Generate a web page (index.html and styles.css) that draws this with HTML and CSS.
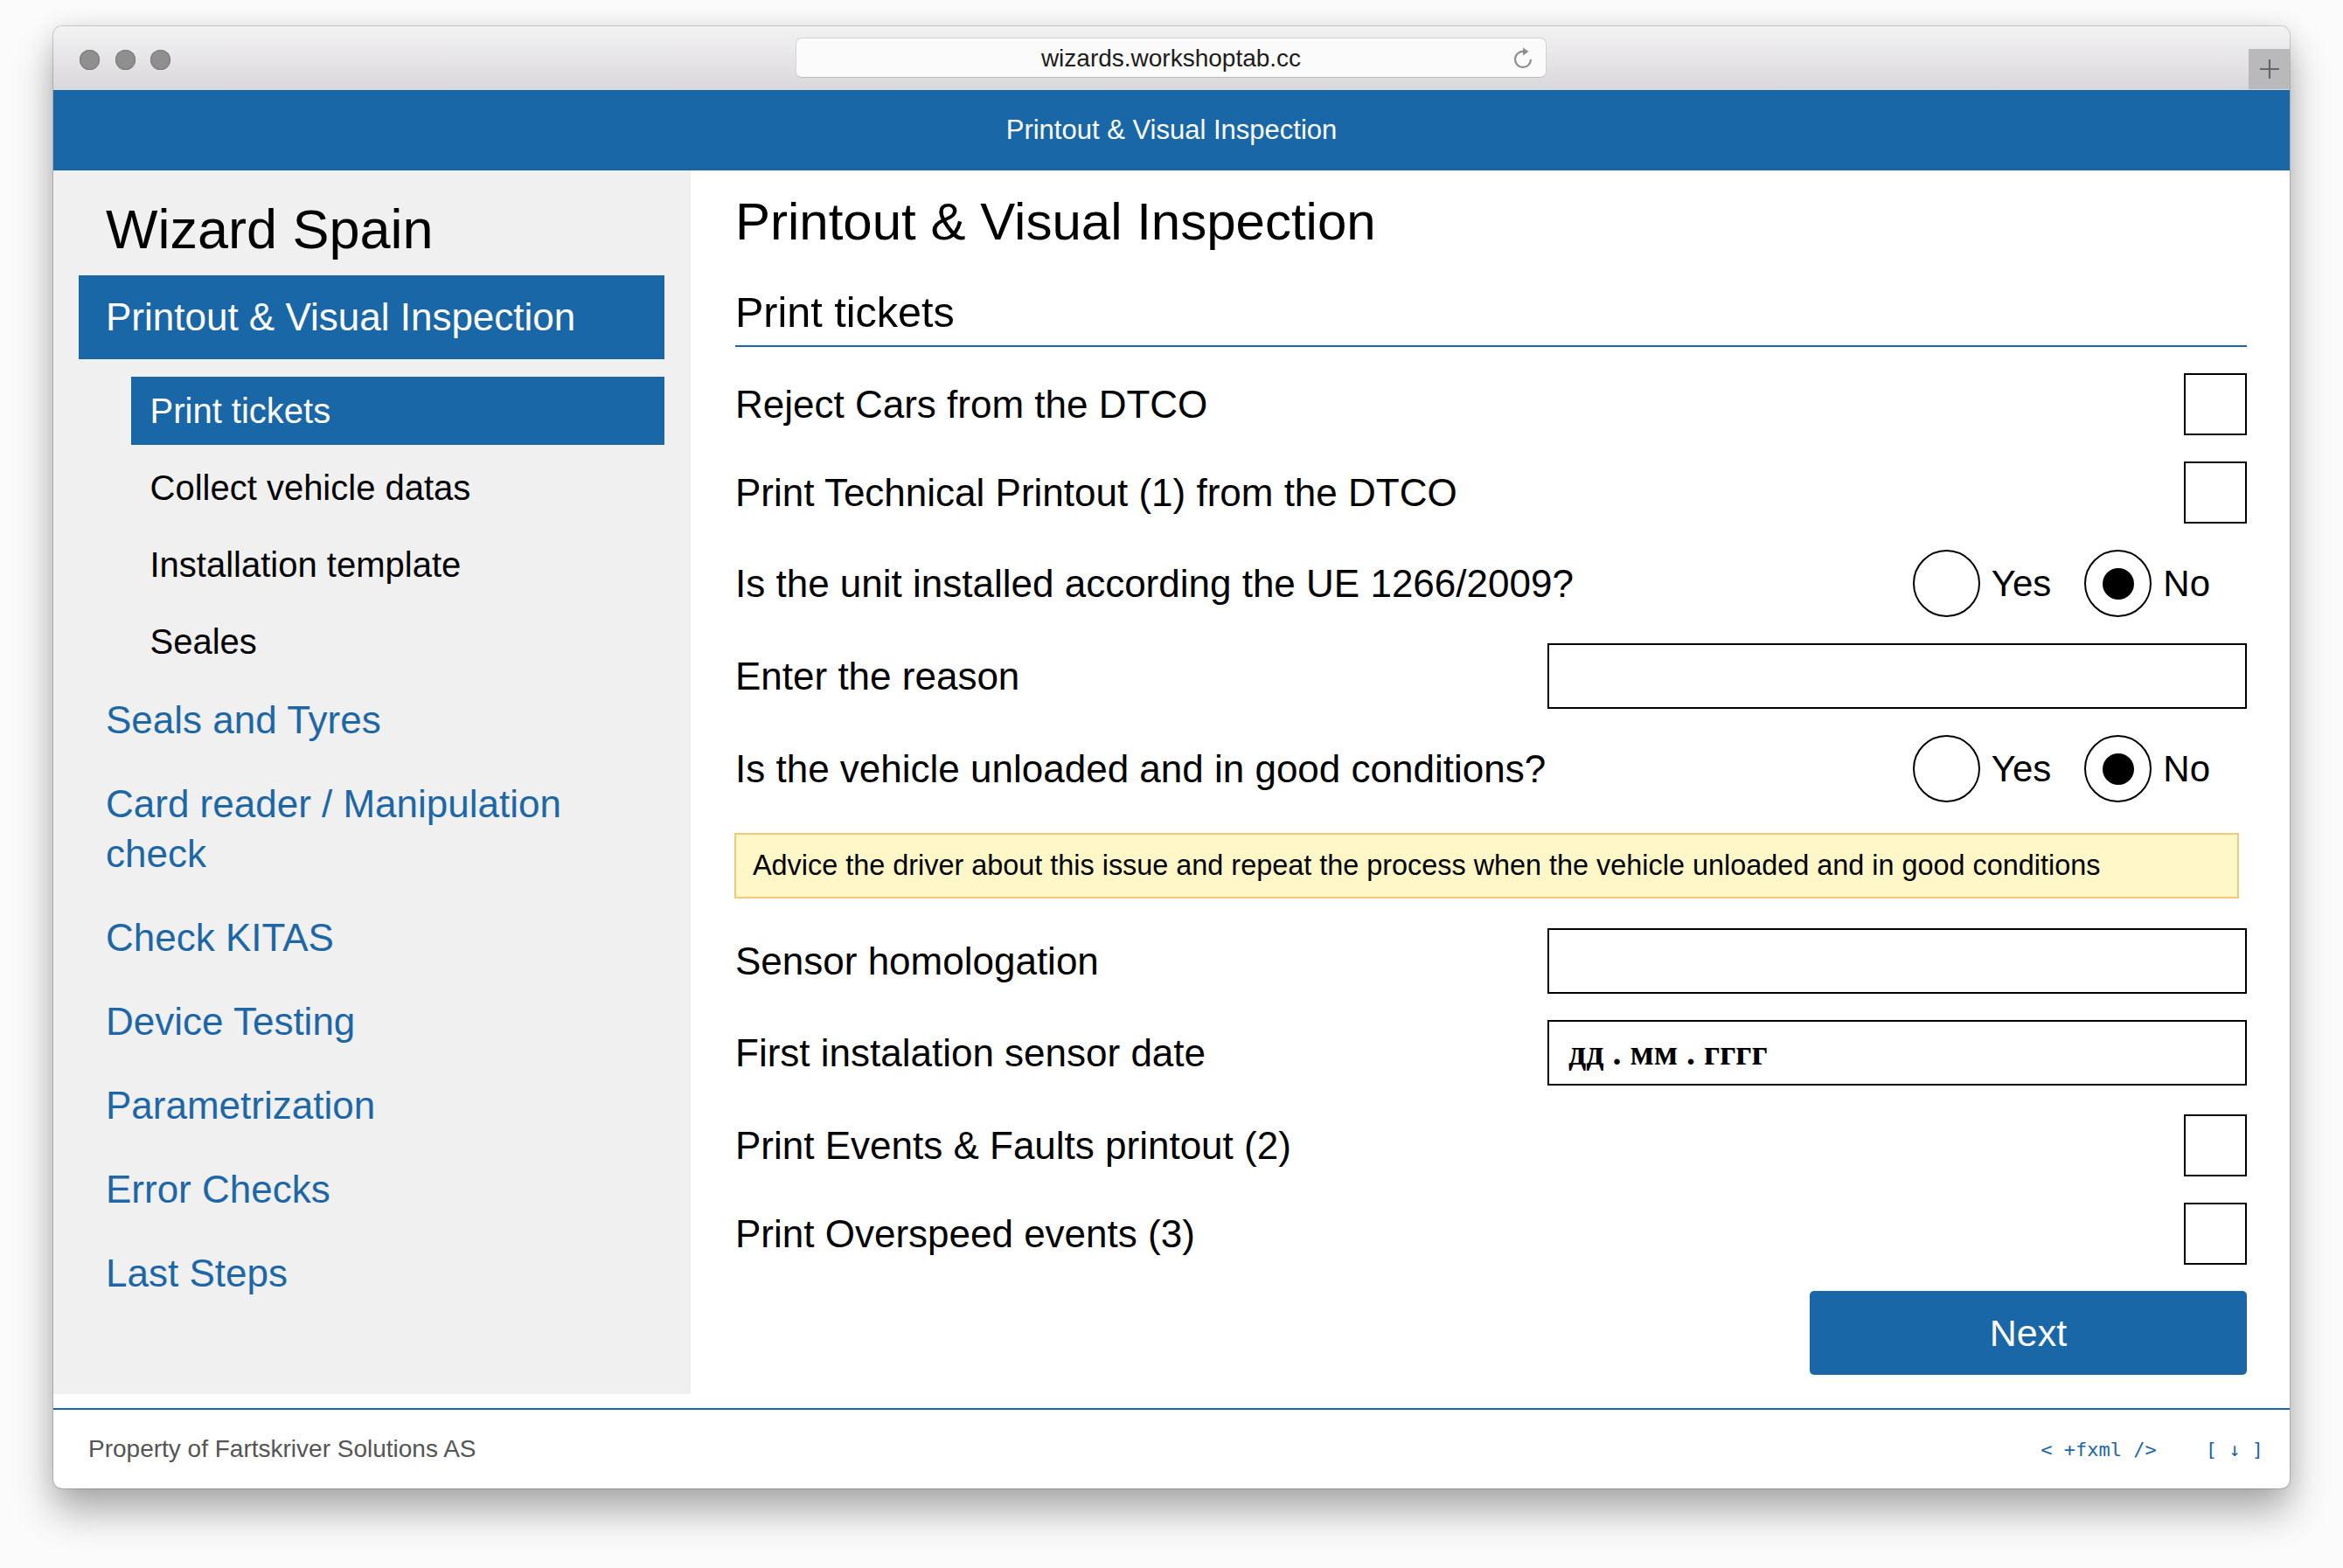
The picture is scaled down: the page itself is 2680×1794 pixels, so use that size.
FILE: index.html
```html
<!DOCTYPE html>
<html lang="en">
<head>
<meta charset="utf-8">
<title>Wizard Spain - Printout &amp; Visual Inspection</title>
<link rel="stylesheet" href="styles.css">
</head>
<body>
<div class="window">
  <div class="titlebar">
    <div class="lights"><span></span><span></span><span></span></div>
    <div class="url">
      <span class="url-text">wizards.workshoptab.cc</span>
      <svg class="reload" viewBox="0 0 24 28" width="24" height="28" aria-hidden="true">
        <path d="M13 7 A9 9 0 1 0 21 16" fill="none" stroke="#8d8d8d" stroke-width="2.2"/>
        <polygon points="12,2.5 18.5,7 12,11.5" fill="#8d8d8d"/>
      </svg>
    </div>
    <div class="spacer"></div>
    <div class="newtab">
      <svg viewBox="0 0 24 24" width="24" height="24" aria-hidden="true">
        <path d="M12 1 V23 M1 12 H23" stroke="#666" stroke-width="2.2" fill="none"/>
      </svg>
    </div>
  </div>

  <header class="appbar">Printout &amp; Visual Inspection</header>

  <div class="main">
    <aside class="sidebar">
      <h2 class="wizard-title">Wizard Spain</h2>
      <div class="step step-active">Printout &amp; Visual Inspection</div>
      <ul class="substeps">
        <li class="sub sub-active">Print tickets</li>
        <li class="sub">Collect vehicle datas</li>
        <li class="sub">Installation template</li>
        <li class="sub">Seales</li>
      </ul>
      <nav class="links">
        <a href="#">Seals and Tyres</a>
        <a href="#">Card reader / Manipulation check</a>
        <a href="#">Check KITAS</a>
        <a href="#">Device Testing</a>
        <a href="#">Parametrization</a>
        <a href="#">Error Checks</a>
        <a href="#">Last Steps</a>
      </nav>
    </aside>

    <section class="content">
      <h1 class="page-title">Printout &amp; Visual Inspection</h1>
      <h2 class="section-title">Print tickets</h2>

      <div class="form">
        <div class="row">
          <span class="label">Reject Cars from the DTCO</span>
          <span class="check"></span>
        </div>
        <div class="row">
          <span class="label">Print Technical Printout (1) from the DTCO</span>
          <span class="check"></span>
        </div>
        <div class="row">
          <span class="label">Is the unit installed according the UE 1266/2009?</span>
          <div class="radios">
            <span class="radio"></span><span class="opt">Yes</span>
            <span class="radio radio-on"></span><span class="opt">No</span>
          </div>
        </div>
        <div class="row">
          <span class="label">Enter the reason</span>
          <span class="field"></span>
        </div>
        <div class="row">
          <span class="label">Is the vehicle unloaded and in good conditions?</span>
          <div class="radios">
            <span class="radio"></span><span class="opt">Yes</span>
            <span class="radio radio-on"></span><span class="opt">No</span>
          </div>
        </div>
        <div class="advice">Advice the driver about this issue and repeat the process when the vehicle unloaded and in good conditions</div>
        <div class="row">
          <span class="label">Sensor homologation</span>
          <span class="field"></span>
        </div>
        <div class="row">
          <span class="label">First instalation sensor date</span>
          <span class="field field-date">дд . мм . гггг</span>
        </div>
        <div class="row row-shift">
          <span class="label">Print Events &amp; Faults printout (2)</span>
          <span class="check"></span>
        </div>
        <div class="row">
          <span class="label">Print Overspeed events (3)</span>
          <span class="check"></span>
        </div>
        <div class="actions">
          <button class="next" type="button">Next</button>
        </div>
      </div>
    </section>
  </div>

  <footer class="footer">
    <span class="owner">Property of Fartskriver Solutions AS</span>
    <span class="devlinks"><span>&lt; +fxml /&gt;</span><span>[ ↓ ]</span></span>
  </footer>
</div>
</body>
</html>
```

FILE: styles.css
```css
html, body {
  margin: 0;
  padding: 0;
}

body {
  background: #fbfbfb;
  font-family: "Liberation Sans", Arial, sans-serif;
  color: #000;
  width: 2680px;
  height: 1794px;
  overflow: hidden;
}

.window {
  width: 2558px;
  height: 1673px;
  margin: 30px auto 0;
  background: #fff;
  border-radius: 10px;
  overflow: hidden;
  display: flex;
  flex-direction: column;
  box-shadow: 0 0 0 1px rgba(0, 0, 0, 0.16), 0 26px 45px rgba(0, 0, 0, 0.32), 0 0 28px rgba(0, 0, 0, 0.08);
}

/* ---------- browser chrome ---------- */
.titlebar {
  height: 73px;
  flex: none;
  display: grid;
  grid-template-columns: 849px 859px 1fr 47px;
  background: linear-gradient(#f3f2f3, #d9d7da);
}

.lights {
  display: flex;
  gap: 17.5px;
  padding: 27px 0 0 30px;
  align-self: start;
}

.lights span {
  width: 23px;
  height: 23px;
  border-radius: 50%;
  background: #8f8f8f;
  box-shadow: inset 0 0 0 1px #7c7c7c;
}

.url {
  position: relative;
  align-self: start;
  margin-top: 13px;
  height: 46px;
  box-sizing: border-box;
  border: 1px solid #d4d3d4;
  border-bottom-color: #bdbcbd;
  border-radius: 7px;
  background: #fbfbfb;
  display: flex;
  align-items: center;
  justify-content: center;
}

.url-text {
  font-size: 28px;
  color: #1c1c1c;
  padding-top: 2px;
}

.reload {
  position: absolute;
  right: 14px;
  top: 8px;
}

.newtab {
  align-self: end;
  margin-bottom: 1px;
  height: 46px;
  background: #b9b8bb;
  display: flex;
  align-items: center;
  justify-content: center;
}

.appbar {
  height: 92px;
  flex: none;
  background: #1967a7;
  color: #fff;
  font-size: 31px;
  display: flex;
  align-items: center;
  justify-content: center;
}

/* ---------- layout ---------- */
.main {
  height: 1400px;
  flex: none;
  display: flex;
}

.sidebar {
  width: 729px;
  flex: none;
  box-sizing: border-box;
  background: #f0f0f0;
  padding: 31px 30px 0 29px;
}

.wizard-title {
  margin: 0;
  padding-left: 31px;
  font-size: 63px;
  line-height: 72px;
  font-weight: normal;
}

.step-active {
  margin-top: 17px;
  padding-left: 31px;
  background: #1967a7;
  color: #fff;
  font-size: 44px;
  line-height: 96px;
}

.substeps {
  list-style: none;
  margin: 20px 0 22px 60px;
  padding: 0;
}

.sub {
  font-size: 40px;
  line-height: 78px;
  padding-left: 21.5px;
  margin-bottom: 10px;
}

.sub-active {
  background: #1967a7;
  color: #fff;
}

.links a {
  display: block;
  padding: 0 40px 0 31px;
  margin-bottom: 39px;
  font-size: 44px;
  line-height: 57px;
  color: #1d67a6;
  text-decoration: none;
}

.content {
  flex: 1;
  box-sizing: border-box;
  padding: 0 49px 0 51px;
}

.page-title {
  margin: 24px 0 0;
  font-size: 60px;
  line-height: 70px;
  font-weight: normal;
}

.section-title {
  margin: 38px 0 0;
  padding-bottom: 8px;
  border-bottom: 2px solid #1967a7;
  font-size: 48.5px;
  line-height: 60px;
  font-weight: normal;
}

/* ---------- form ---------- */
.form {
  display: flex;
  flex-direction: column;
  gap: 30px;
  padding-top: 30px;
}

.row {
  display: flex;
  align-items: center;
  justify-content: space-between;
  font-size: 44px;
}

.row-shift {
  margin-top: 3px;
}

.check {
  width: 72px;
  height: 71px;
  box-sizing: border-box;
  border: 2px solid #000;
}

.radios {
  display: flex;
  align-items: center;
  padding-right: 42px;
}

.radio {
  width: 77px;
  height: 77px;
  box-sizing: border-box;
  border: 2px solid #000;
  border-radius: 50%;
  display: flex;
  align-items: center;
  justify-content: center;
}

.radio-on::after {
  content: "";
  width: 36px;
  height: 36px;
  border-radius: 50%;
  background: #000;
}

.opt {
  font-size: 42px;
  margin-left: 13px;
  margin-right: 38px;
}

.opt:last-child {
  margin-right: 0;
}

.field {
  width: 800px;
  height: 75px;
  box-sizing: border-box;
  border: 2px solid #000;
}

.field-date {
  display: flex;
  align-items: center;
  padding-left: 22px;
  font-family: "Liberation Serif", "Times New Roman", serif;
  font-weight: bold;
  font-size: 40px;
}

.advice {
  margin: 5px 9px 4px -1px;
  height: 75px;
  box-sizing: border-box;
  border: 2px solid #f1c979;
  background: #fff7c8;
  padding-left: 19px;
  display: flex;
  align-items: center;
  font-size: 32.4px;
}

.actions {
  display: flex;
  justify-content: flex-end;
}

.next {
  width: 500px;
  height: 96px;
  border: none;
  border-radius: 5px;
  background: #1967a7;
  color: #fff;
  font-family: "Liberation Sans", Arial, sans-serif;
  font-size: 43px;
  padding: 0;
}

/* ---------- footer ---------- */
.footer {
  margin-top: 16px;
  height: 90px;
  flex: none;
  border-top: 2px solid #1967a7;
  padding: 0 30px 0 40px;
  display: flex;
  align-items: center;
  justify-content: space-between;
  font-size: 28px;
  color: #555;
}

.devlinks {
  display: flex;
  gap: 56px;
  font-family: "DejaVu Sans Mono", "Liberation Mono", monospace;
  font-size: 22px;
  color: #1d67a6;
}
```
